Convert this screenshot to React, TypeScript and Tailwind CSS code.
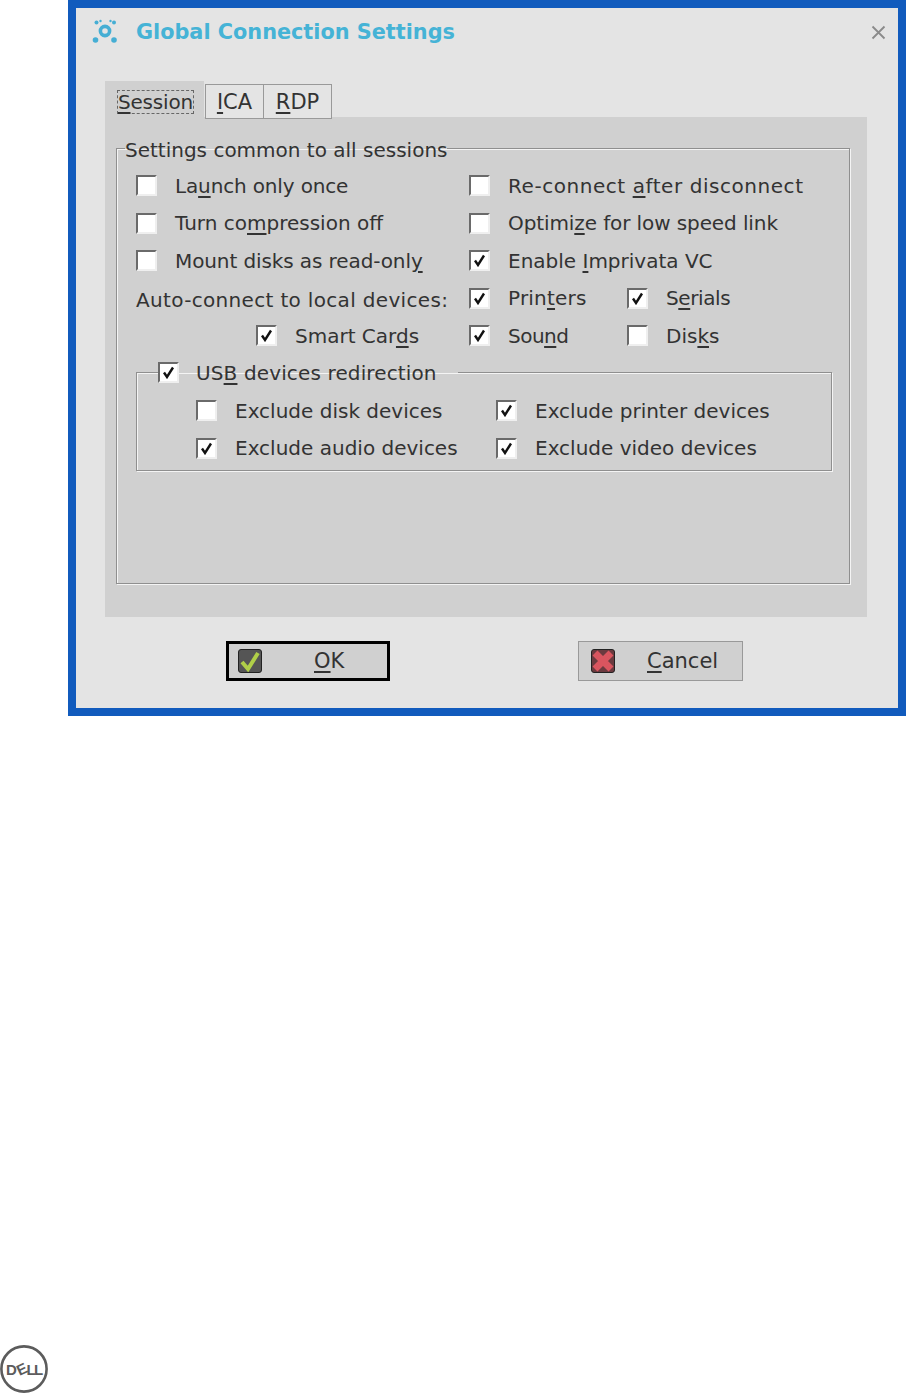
import React from "react";

const font = { fontFamily: '"DejaVu Sans", sans-serif' };

function Box({ checked }: { checked?: boolean }) {
  return (
    <span className="flex h-[21px] w-[21px] shrink-0 items-center justify-center border-2 border-t-[#6a6a6a] border-l-[#6a6a6a] border-r-[#efefef] border-b-[#efefef] bg-white">
      {checked && (
        <svg width="13" height="13" viewBox="0 0 13 13">
          <path d="M2 6.5 L5 11 L11 1.5" fill="none" stroke="#111" strokeWidth="2.4" />
        </svg>
      )}
    </span>
  );
}

function Check({ checked, pre, u, post, gap = "gap-[18px]", track = "" }: { checked?: boolean; pre: string; u: string; post: string; gap?: string; track?: string }) {
  return (
    <div className={`flex h-full items-center whitespace-nowrap ${gap}`}>
      <Box checked={checked} />
      <span className={track}>
        {pre}
        <span className="underline decoration-[#333] underline-offset-[3px]">{u}</span>
        {post}
      </span>
    </div>
  );
}

function TabLabel({ u, post }: { u: string; post: string }) {
  return (
    <>
      <span className="underline underline-offset-[3px]">{u}</span>
      {post}
    </>
  );
}

function ConnectionIcon() {
  return (
    <svg width="28" height="28" viewBox="0 0 28 28" fill="#45aed4">
      <circle cx="14" cy="13" r="4.6" fill="none" stroke="#45aed4" strokeWidth="3.6" />
      <circle cx="5.5" cy="4.5" r="2" />
      <circle cx="23" cy="4.5" r="2" />
      <circle cx="9.5" cy="3" r="1.2" />
      <circle cx="19.5" cy="3" r="1.2" />
      <circle cx="4.5" cy="22" r="2.8" />
      <circle cx="23" cy="22" r="2.8" />
    </svg>
  );
}

function DellLogo() {
  return (
    <svg width="48" height="48" viewBox="0 0 48 48">
      <circle cx="24" cy="24" r="22.6" fill="none" stroke="#5c5c5c" strokeWidth="2.6" />
      <g fill="#5c5c5c" fontFamily="'Liberation Sans', sans-serif" fontWeight="700" fontSize="15">
        <text x="6" y="29.5">D</text>
        <text x="0" y="0" transform="translate(19.5 31) rotate(-25)">E</text>
        <text x="26.5" y="29.5">L</text>
        <text x="34" y="29.5">L</text>
      </g>
    </svg>
  );
}

export default function App() {
  return (
    <div className="flex min-h-[1393px] flex-col justify-between bg-white text-[20px] leading-[26px] text-[#333]" style={font}>
      <div className="ml-[68px] h-[716px] w-[838px] border-[8px] border-[#115bbd] bg-[#e4e4e4]">
        <div className="flex h-[48px] items-center pl-[15px] pr-[12px]">
          <ConnectionIcon />
          <span className="ml-[17px] text-[20.8px] font-bold text-[#45b3d6]">Global Connection Settings</span>
          <svg className="ml-auto" width="15" height="15" viewBox="0 0 15 15">
            <path d="M1.5 1.5 L13.5 13.5 M13.5 1.5 L1.5 13.5" stroke="#8a8a8a" strokeWidth="1.8" />
          </svg>
        </div>

        <div className="ml-[29px] mt-[25px] w-[762px]">
          <div className="flex h-[36px] items-start text-[21px]">
            <div className="flex h-[36px] w-[99px] items-start bg-[#d0d0d0] pl-[12px] pt-[9px]">
              <span className="border border-dashed border-[#666] text-[20px] leading-[22px] tracking-[-0.2px]">
                <TabLabel u="S" post="ession" />
              </span>
            </div>
            <div className="relative ml-[1px] mt-[3px] flex h-[35px] w-[59px] items-center justify-center border border-[#999] bg-[#e4e4e4]">
              <TabLabel u="I" post="CA" />
            </div>
            <div className="relative -ml-[1px] mt-[3px] flex h-[35px] w-[69px] items-center justify-center border border-[#999] bg-[#e4e4e4]">
              <TabLabel u="R" post="DP" />
            </div>
          </div>

          <div className="h-[500px] bg-[#d0d0d0] px-[11px] pt-[16px]">
            <fieldset className="h-[451px] w-[734px] border border-[#8f8f8f] pl-[19px] shadow-[inset_1px_1px_0_#f4f4f4,1px_1px_0_#f4f4f4]">
              <legend className="-ml-[11px] pt-[4px]">Settings common to all sessions</legend>
              <div className="grid grid-cols-[333px_158px_1fr] auto-rows-[37.5px] pt-[4px]">
                <Check pre="La" u="u" post="nch only once" track="tracking-[-0.15px]" />
                <div className="col-span-2">
                  <Check pre="Re-connect " u="a" post="fter disconnect" track="tracking-[0.55px]" />
                </div>
                <Check pre="Turn co" u="m" post="pression off" />
                <div className="col-span-2">
                  <Check pre="Optimi" u="z" post="e for low speed link" track="tracking-[-0.1px]" />
                </div>
                <Check pre="Mount disks as read-onl" u="y" post="" track="tracking-[-0.1px]" />
                <div className="col-span-2">
                  <Check checked pre="Enable " u="I" post="mprivata VC" />
                </div>
                <div className="flex items-center pt-[4px] tracking-[0.33px]">Auto-connect to local devices:</div>
                <Check checked pre="Prin" u="t" post="ers" track="tracking-[0.2px]" />
                <Check checked pre="S" u="e" post="rials" track="tracking-[-0.4px]" />
                <div className="pl-[120px]">
                  <Check checked pre="Smart Car" u="d" post="s" />
                </div>
                <Check checked pre="Sou" u="n" post="d" track="tracking-[-0.5px]" />
                <Check pre="Dis" u="k" post="s" />
              </div>

              <fieldset className="mt-[5px] h-[111px] w-[696px] border border-[#8f8f8f] pl-[59px] shadow-[inset_1px_1px_0_#f4f4f4,1px_1px_0_#f4f4f4]">
                <legend className="-ml-[38px] w-[300px]">
                  <Check checked gap="gap-[17px]" pre="US" u="B" post=" devices redirection" track="tracking-[0.13px]" />
                </legend>
                <div className="grid grid-cols-[300px_1fr] auto-rows-[37.5px] pt-[6.5px]">
                  <Check pre="Exclude disk devices" u="" post="" />
                  <Check checked pre="Exclude printer devices" u="" post="" />
                  <Check checked pre="Exclude audio devices" u="" post="" />
                  <Check checked pre="Exclude video devices" u="" post="" />
                </div>
              </fieldset>
            </fieldset>
          </div>
        </div>

        <div className="ml-[150px] mt-[24px] flex items-start text-[21px]">
          <button className="flex h-[40px] w-[164px] items-center border-[3px] border-black bg-[#d0d0d0] pl-[9px]">
            <span className="flex h-[24px] w-[24px] items-center justify-center rounded-[3px] border border-[#222] bg-[#555]">
              <svg width="22" height="22" viewBox="0 0 22 22">
                <path d="M3 12 L9 19 L19 3" fill="none" stroke="#b0cf48" strokeWidth="4" />
              </svg>
            </span>
            <span className="ml-[52px]">
              <TabLabel u="O" post="K" />
            </span>
          </button>
          <button className="ml-[188px] flex h-[40px] w-[165px] items-center border border-[#999] bg-[#d0d0d0] pl-[12px]">
            <span className="flex h-[24px] w-[24px] items-center justify-center rounded-[3px] border border-[#222] bg-[#6b3a3f]">
              <svg width="22" height="22" viewBox="0 0 22 22">
                <path d="M3 3 L19 19 M19 3 L3 19" fill="none" stroke="#d9555f" strokeWidth="7" />
              </svg>
            </span>
            <span className="ml-[32px]">
              <TabLabel u="C" post="ancel" />
            </span>
          </button>
        </div>
      </div>

      <div className="ml-0">
        <DellLogo />
      </div>
    </div>
  );
}
